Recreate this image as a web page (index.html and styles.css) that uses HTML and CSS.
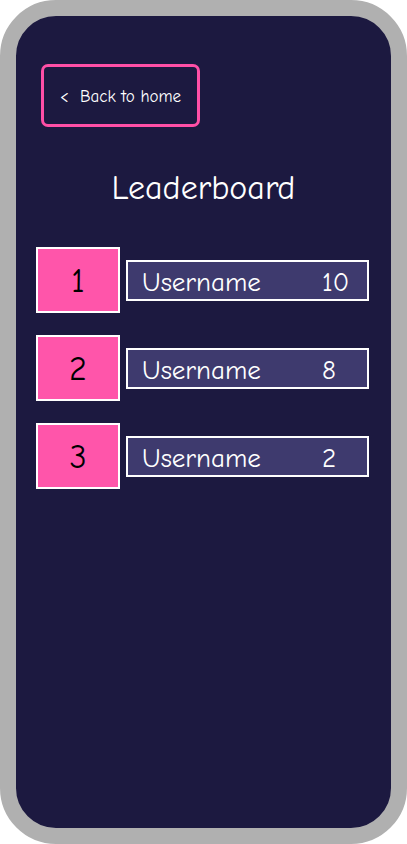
FILE: index.html
```html
<!DOCTYPE html>
<html>
<head>
<meta charset="utf-8">
<link rel="stylesheet" href="styles.css">
</head>
<body>
<div class="phone">
  <div class="screen">
    <button class="back">&lt;&nbsp; Back to home</button>
    <h1 class="title">Leaderboard</h1>
    <div class="board">
      <div class="row">
        <div class="rank">1</div>
        <div class="entry"><span class="name">Username</span><span class="score">10</span></div>
      </div>
      <div class="row">
        <div class="rank">2</div>
        <div class="entry"><span class="name">Username</span><span class="score">8</span></div>
      </div>
      <div class="row">
        <div class="rank">3</div>
        <div class="entry"><span class="name">Username</span><span class="score">2</span></div>
      </div>
    </div>
  </div>
</div>
</body>
</html>
```

FILE: styles.css
```css
html, body {
  margin: 0;
  padding: 0;
  background: #ffffff;
}
body {
  font-family: "Comic Sans MS", "Comic Neue", "Lato", "DejaVu Sans", sans-serif;
}
.phone {
  width: 407px;
  height: 844px;
  box-sizing: border-box;
  border: 16px solid #b0b0b0;
  border-radius: 56px;
  background: #1c1940;
  overflow: hidden;
}
.screen {
  height: 100%;
  padding: 48px 22px 0 20px;
  box-sizing: border-box;
  display: flex;
  flex-direction: column;
}
.back {
  align-self: flex-start;
  margin-left: 5px;
  width: 159px;
  height: 63px;
  box-sizing: border-box;
  background: transparent;
  border: 3px solid #ff4fa6;
  border-radius: 7px;
  color: #ffffff;
  font-family: inherit;
  font-size: 17px;
  padding: 2px 0 0 0;
  cursor: pointer;
}
.title {
  margin: 41px 0 0 0;
  text-align: center;
  color: #ffffff;
  font-weight: normal;
  font-size: 34px;
  line-height: 40px;
  padding-left: 2px;
}
.board {
  margin-top: 39px;
  display: flex;
  flex-direction: column;
  gap: 22px;
}
.row {
  display: flex;
  align-items: center;
  gap: 6px;
}
.rank {
  width: 84px;
  height: 66px;
  box-sizing: border-box;
  background: #ff55aa;
  border: 2px solid #ffffff;
  color: #000000;
  font-size: 34px;
  display: flex;
  align-items: center;
  justify-content: center;
  padding-top: 1px;
}
.entry {
  flex: 1;
  height: 41px;
  box-sizing: border-box;
  background: #3e3a6e;
  border: 2px solid #ffffff;
  color: #ffffff;
  font-size: 27px;
  display: flex;
  align-items: center;
  padding: 5px 15px 0 14px;
}
.name {
  flex: 1;
}
.score {
  width: 30px;
}
```
